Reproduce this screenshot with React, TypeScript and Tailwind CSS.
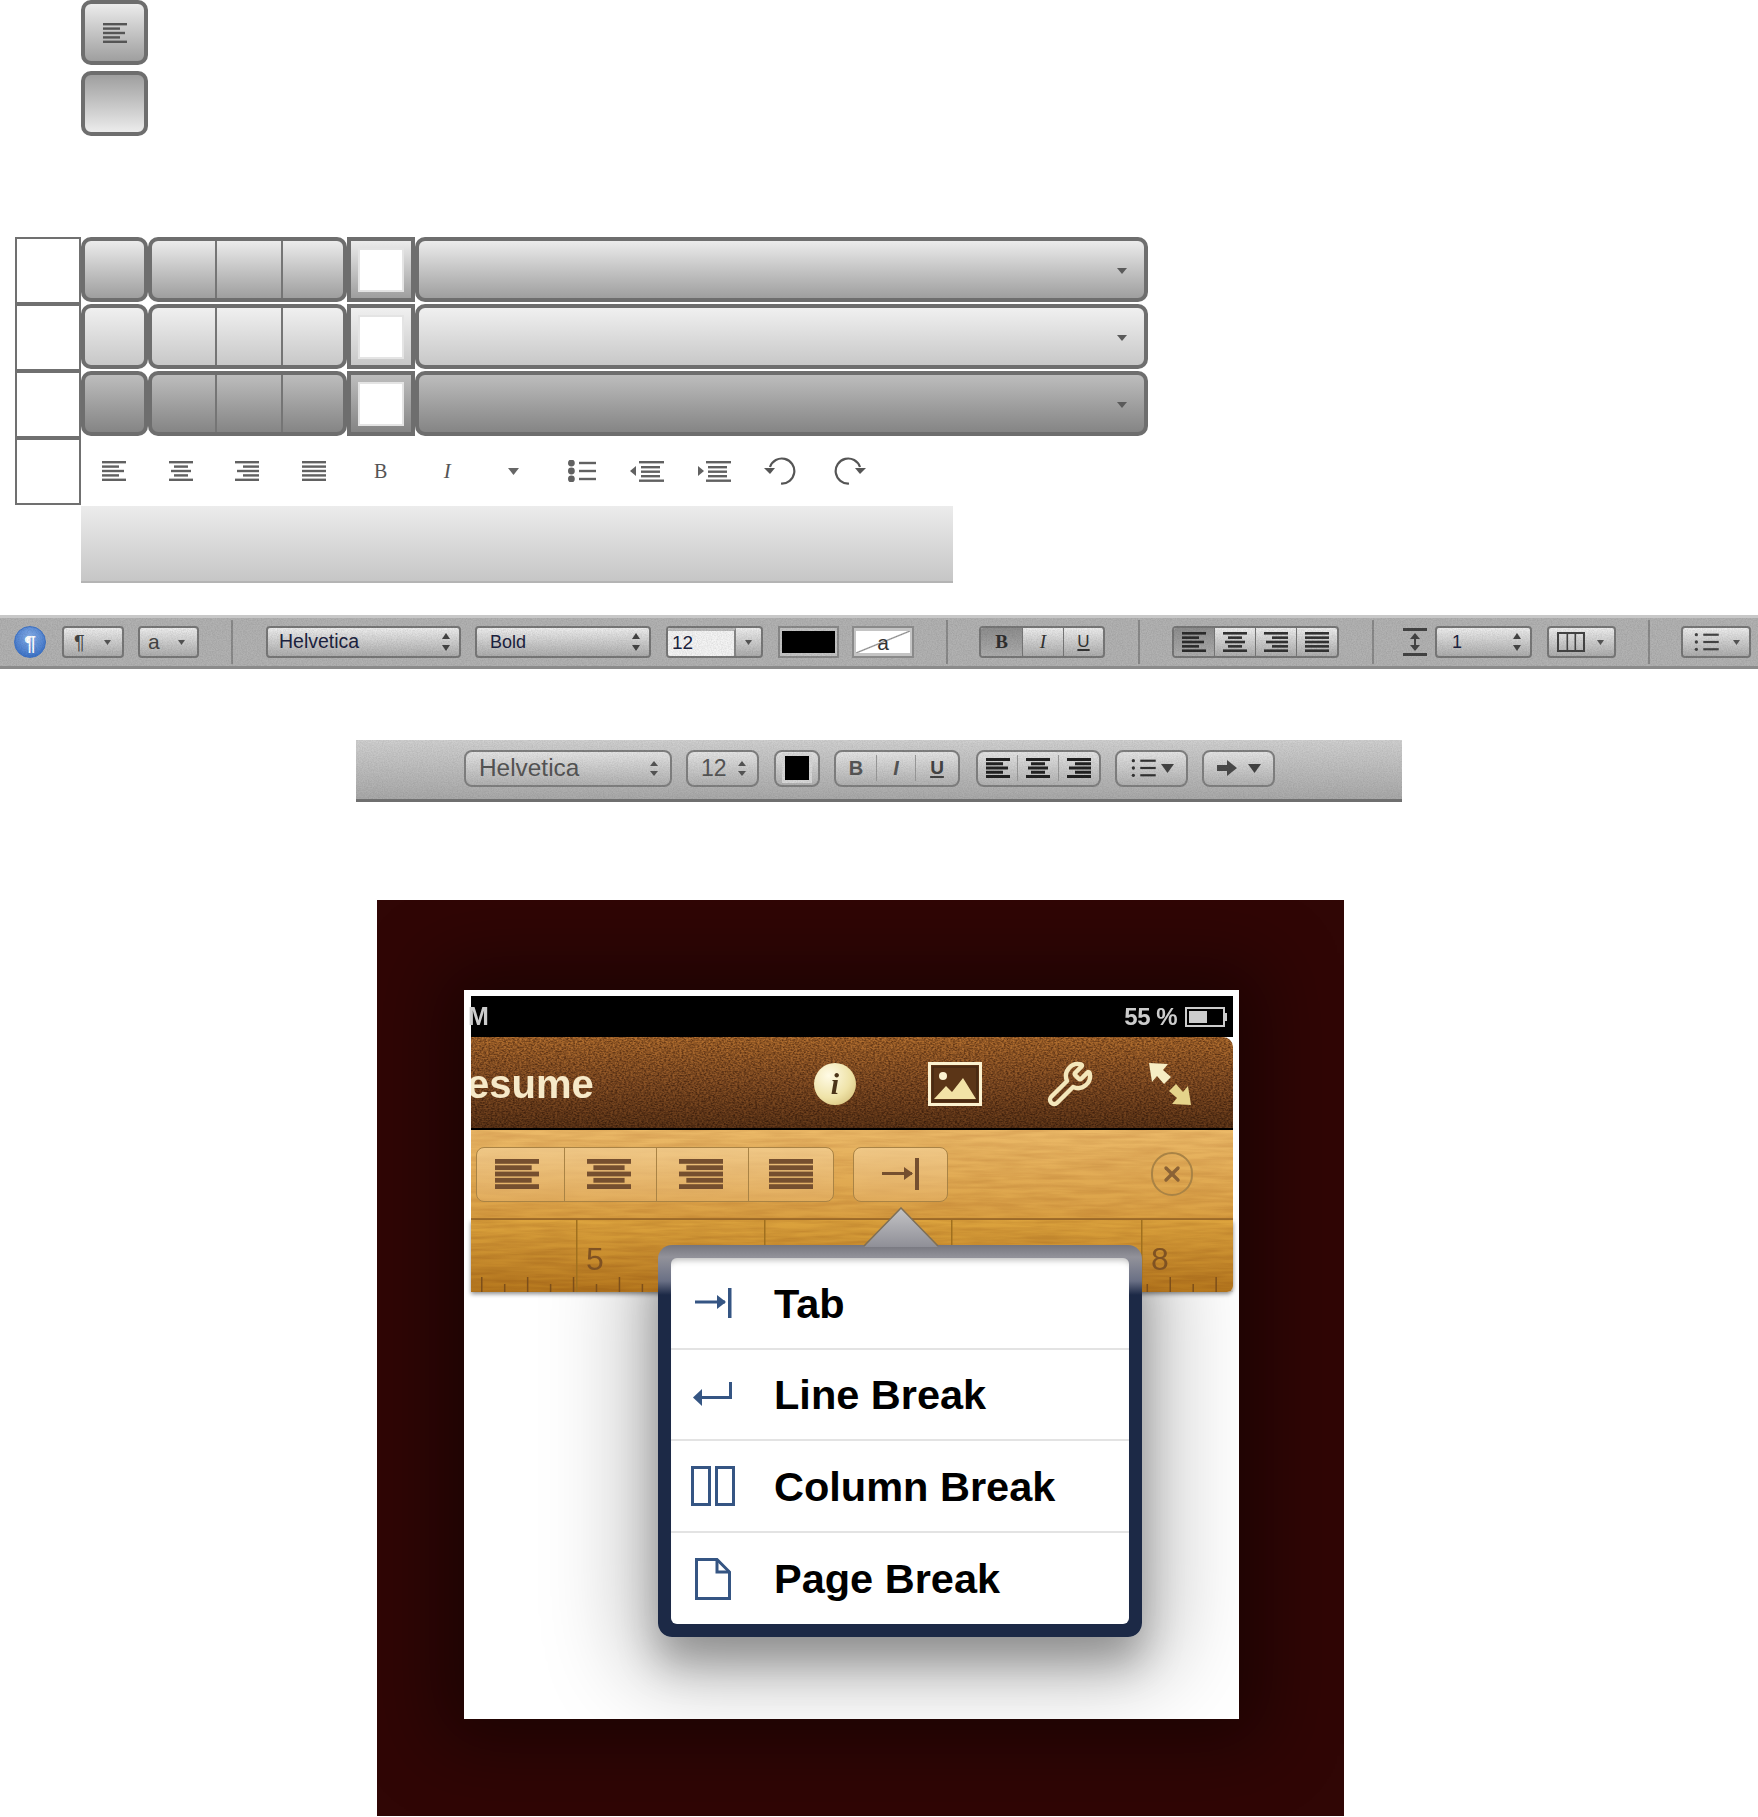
import { Wrench, X } from "lucide-react";

const sans = "font-['Liberation_Sans',Arial,sans-serif]";
const serif = "font-['Liberation_Serif','Times_New_Roman',serif]";

type Align = "left" | "center" | "right" | "justify";

const barWidths: Record<Align, number[]> = {
  left: [24, 17, 22, 17, 24],
  center: [24, 14, 20, 14, 24],
  right: [24, 16, 22, 16, 24],
  justify: [24, 24, 24, 24, 24],
};

const heavyWidths: Record<Align, number[]> = {
  left: [24, 20, 24, 20, 24],
  center: [24, 17, 24, 17, 24],
  right: [24, 20, 24, 20, 24],
  justify: [24, 24, 24, 24, 24],
};

function AlignIcon({ kind, width = 24, height = 20, color = "#616161", bar = 2.4, heavy = false }: { kind: Align; width?: number; height?: number; color?: string; bar?: number; heavy?: boolean }) {
  const step = (20 - bar) / 4;
  return (
    <svg width={width} height={height} viewBox="0 0 24 20" preserveAspectRatio="none" className="shrink-0">
      {(heavy ? heavyWidths : barWidths)[kind].map((w, i) => {
        const x = kind === "left" ? 0 : kind === "right" ? 24 - w : (24 - w) / 2;
        return <rect key={i} x={x} y={i * step} width={w} height={bar} fill={color} />;
      })}
    </svg>
  );
}

function Caret({ width = 9, height = 6, color = "#555" }: { width?: number; height?: number; color?: string }) {
  return (
    <svg width={width} height={height} viewBox="0 0 10 6" preserveAspectRatio="none" className="shrink-0">
      <polygon points="0,0 10,0 5,6" fill={color} />
    </svg>
  );
}

function UpDown({ color = "#444", height = 18 }: { color?: string; height?: number }) {
  return (
    <svg width="8" height={height} viewBox="0 0 8 18" preserveAspectRatio="none" className="shrink-0">
      <polygon points="4,0 8,6 0,6" fill={color} />
      <polygon points="0,12 8,12 4,18" fill={color} />
    </svg>
  );
}

function ListIcon({ width = 28, height = 22, color = "#616161", dot = 3.4 }: { width?: number; height?: number; color?: string; dot?: number }) {
  return (
    <svg width={width} height={height} viewBox="0 0 28 22" className="shrink-0">
      {[3, 11, 19].map((y) => (
        <g key={y}>
          <circle cx="3.4" cy={y} r={dot} fill={color} />
          <rect x="11" y={y - 1.2} width="17" height="2.4" fill={color} />
        </g>
      ))}
    </svg>
  );
}

function IndentIcon({ out }: { out?: boolean }) {
  return (
    <svg width="34" height="22" viewBox="0 0 34 22" className="shrink-0">
      <rect x="9" y="1" width="25" height="2.4" fill="#616161" />
      <rect x="11" y="6" width="19" height="2.4" fill="#616161" />
      <rect x="11" y="10.5" width="19" height="2.4" fill="#616161" />
      <rect x="11" y="15" width="19" height="2.4" fill="#616161" />
      <rect x="9" y="19.5" width="25" height="2.4" fill="#616161" />
      {out ? <polygon points="0,11 6,6 6,16" fill="#616161" /> : <polygon points="7,11 1,6 1,16" fill="#616161" />}
    </svg>
  );
}

function TurnIcon({ redo }: { redo?: boolean }) {
  return (
    <svg width="32" height="28" viewBox="0 0 32 28" className={redo ? "shrink-0 -scale-x-100" : "shrink-0"}>
      <path d="M6 10 A12.5 12.5 0 1 1 17 26.5" fill="none" stroke="#555" strokeWidth="2.2" />
      <polygon points="0,11 11,11 6,17" fill="#555" />
    </svg>
  );
}

function Grain({ id, freq, seed = 3, tint = "0 0 0", className }: { id: string; freq: string; seed?: number; tint?: string; className: string }) {
  const [r, g, b] = tint.split(" ");
  return (
    <svg className={`pointer-events-none absolute inset-0 h-full w-full ${className}`}>
      <filter id={id} colorInterpolationFilters="sRGB">
        <feTurbulence type="fractalNoise" baseFrequency={freq} numOctaves="3" seed={seed} />
        <feColorMatrix values={`0 0 0 0 ${r} 0 0 0 0 ${g} 0 0 0 0 ${b} 2 0 0 0 -0.6`} />
      </filter>
      <rect width="100%" height="100%" filter={`url(#${id})`} />
    </svg>
  );
}

const rowTone = {
  normal: "from-[#ececec] to-[#9f9f9f]",
  light: "from-[#f0f0f0] to-[#c8c8c8]",
  dark: "from-[#bdbdbd] to-[#858585]",
};

function SpriteRow({ tone }: { tone: keyof typeof rowTone }) {
  const grad = `bg-linear-to-b ${rowTone[tone]}`;
  return (
    <div className="mb-[2px] flex h-[65px]">
      <div className={`w-[67px] rounded-[10px] border-[4px] border-[#6e6e6e] ${grad}`} />
      <div className={`flex w-[199px] rounded-[10px] border-[4px] border-[#6e6e6e] ${grad}`}>
        <div className="w-[65px] border-r-2 border-[#757575]" />
        <div className="w-[66px] border-r-2 border-[#757575]" />
      </div>
      <div className={`flex w-[68px] items-center justify-center border-[4px] border-[#6e6e6e] ${grad}`}>
        <div className="h-[44px] w-[46px] border-2 border-[#e4e4e4] bg-white" />
      </div>
      <div className={`flex w-[733px] items-center justify-end rounded-[10px] border-[4px] border-[#6e6e6e] pr-[17px] pt-[3px] ${grad}`}>
        <Caret width={10} height={6} color="#5a5a5a" />
      </div>
    </div>
  );
}

function IconCell({ children }: { children: React.ReactNode }) {
  return <div className="flex w-[66.6px] shrink-0 items-center justify-center">{children}</div>;
}

const macBtn = "flex h-[32px] shrink-0 items-center rounded-[4px] border-2 border-[#787878] bg-linear-to-b from-[#eeeeee] to-[#adadad]";
const sep = "h-[44px] w-[2px] shrink-0 bg-[#8a8a8a]";
const btn2 = "flex h-[37px] shrink-0 items-center rounded-[8px] border-2 border-[#808080] bg-linear-to-b from-[#e4e4e4] to-[#b2b2b2]";

function MainToolbar() {
  return (
    <div className={`relative mt-[32px] flex h-[54px] items-center border-t-[3px] border-b-[3px] border-t-[#c8c8c8] border-b-[#8b8b8b] bg-[#b2b2b2] pl-[14px] ${sans}`}>
      <Grain id="tb1" freq="0.8" className="opacity-[0.08]" />
      <div className="flex h-[32px] w-[32px] shrink-0 items-center justify-center rounded-full border border-[#3f74c8] bg-[radial-gradient(circle_at_50%_35%,#88b0ea,#2a64c0)] text-[21px] font-bold leading-none text-white">¶</div>
      <div className={`${macBtn} ml-[16px] w-[62px] justify-between pl-[10px] pr-[11px] text-[20px] text-[#444]`}>¶<Caret width={7} height={5} /></div>
      <div className={`${macBtn} ml-[14px] w-[61px] justify-between pl-[8px] pr-[12px] text-[21px] text-[#444]`}>a<Caret width={7} height={5} /></div>
      <div className={`${sep} ml-[32px]`} />
      <div className={`${macBtn} ml-[33px] w-[195px] justify-between pl-[11px] pr-[9px] text-[19.5px] text-[#1c2340]`}>Helvetica<UpDown /></div>
      <div className={`${macBtn} ml-[14px] w-[176px] justify-between pl-[13px] pr-[9px] text-[18px] text-[#1c2340]`}>Bold<UpDown /></div>
      <div className={`${macBtn} ml-[15px] w-[97px] overflow-hidden`}>
        <div className="flex h-full w-[68px] items-center border-t-[3px] border-r-2 border-t-[#bbbbbb] border-r-[#888] bg-[#f4f4f4] pl-[4px] text-[19px] text-[#1c2340]">12</div>
        <div className="flex flex-1 justify-center"><Caret width={7} height={5} /></div>
      </div>
      <div className="ml-[15px] flex h-[32px] w-[61px] shrink-0 items-center justify-center border-2 border-[#8a8a8a] bg-[#c4c4c4]">
        <div className="h-[22px] w-[53px] bg-black" />
      </div>
      <div className="relative ml-[13px] flex h-[32px] w-[62px] shrink-0 items-center justify-center border-2 border-[#8a8a8a] bg-[#c4c4c4]">
        <div className="flex h-[22px] w-[54px] items-center justify-center bg-[linear-gradient(to_top_left,#fff_47%,#888_50%,#fff_53%)] text-[21px] leading-none text-[#333]">a</div>
      </div>
      <div className={`${sep} ml-[32px]`} />
      <div className={`${macBtn} ml-[31px] w-[126px] overflow-hidden`}>
        <div className={`flex h-full w-[42px] items-center justify-center border-r border-[#777] bg-linear-to-b from-[#8e8e8e] to-[#adadad] text-[19px] font-bold text-[#2f2f2f] ${serif}`}>B</div>
        <div className={`flex h-full w-[41px] items-center justify-center border-r border-[#777] text-[19px] italic text-[#333] ${serif}`}>I</div>
        <div className={`flex h-full flex-1 items-center justify-center text-[17px] text-[#333] underline decoration-2 underline-offset-[2px] ${sans}`}>U</div>
      </div>
      <div className={`${sep} ml-[33px]`} />
      <div className={`${macBtn} ml-[32px] w-[167px] overflow-hidden`}>
        <div className="flex h-full w-[41px] items-center justify-center border-r border-[#777] bg-linear-to-b from-[#8e8e8e] to-[#adadad]"><AlignIcon kind="left" color="#2c2c2c" bar={2.6} /></div>
        <div className="flex h-full w-[41px] items-center justify-center border-r border-[#777]"><AlignIcon kind="center" color="#333" bar={2.6} /></div>
        <div className="flex h-full w-[41px] items-center justify-center border-r border-[#777]"><AlignIcon kind="right" color="#333" bar={2.6} /></div>
        <div className="flex h-full flex-1 items-center justify-center"><AlignIcon kind="justify" color="#333" bar={2.6} /></div>
      </div>
      <div className={`${sep} ml-[33px]`} />
      <svg width="24" height="28" viewBox="0 0 24 28" className="ml-[29px] shrink-0">
        <rect x="0" y="0" width="24" height="3" fill="#444" />
        <rect x="0" y="25" width="24" height="3" fill="#444" />
        <rect x="11" y="6" width="2" height="16" fill="#444" />
        <polygon points="12,5 17,11 7,11" fill="#444" />
        <polygon points="12,23 17,17 7,17" fill="#444" />
      </svg>
      <div className={`${macBtn} ml-[8px] w-[97px] justify-between pl-[15px] pr-[9px] text-[18px] text-[#1c2340]`}>1<UpDown /></div>
      <div className={`${macBtn} ml-[15px] w-[69px] justify-between pl-[8px] pr-[10px]`}>
        <svg width="28" height="20" viewBox="0 0 28 20" className="shrink-0">
          <rect x="1" y="1" width="26" height="18" fill="none" stroke="#444" strokeWidth="2" />
          <rect x="9.5" y="1" width="1.6" height="18" fill="#444" />
          <rect x="17.5" y="1" width="1.6" height="18" fill="#444" />
        </svg>
        <Caret width={7} height={5} />
      </div>
      <div className={`${sep} ml-[32px]`} />
      <div className={`${macBtn} ml-[31px] w-[70px] justify-between pl-[8px] pr-[9px]`}>
        <ListIcon width={30} height={20} color="#444" dot={1.8} />
        <Caret width={7} height={5} />
      </div>
    </div>
  );
}

function CompactToolbar() {
  return (
    <div className={`relative ml-[356px] mt-[71px] flex h-[62px] w-[1046px] items-center border-b-[3px] border-b-[#6f6f6f] bg-linear-to-b from-[#d0d0d0] to-[#a9a9a9] pb-[3px] pl-[108px] ${sans}`}>
      <Grain id="tb2" freq="0.8" seed={8} className="opacity-[0.07]" />
      <div className={`${btn2} w-[208px] justify-between pl-[13px] pr-[12px] text-[24.4px] text-[#555]`}>Helvetica<UpDown color="#555" height={15} /></div>
      <div className={`${btn2} ml-[14px] w-[73px] justify-between pl-[13px] pr-[11px] text-[23px] text-[#555]`}>12<UpDown color="#555" height={15} /></div>
      <div className={`${btn2} ml-[15px] w-[46px] justify-center`}>
        <div className="box-content h-[24px] w-[24px] border-[3px] border-[#d8d8d8] bg-black" />
      </div>
      <div className={`${btn2} ml-[14px] w-[126px]`}>
        <div className="flex h-[26px] w-[41px] items-center justify-center border-r border-[#999] text-[20px] font-bold text-[#555]">B</div>
        <div className="flex h-[26px] w-[39px] items-center justify-center border-r border-[#999] text-[20px] font-bold italic text-[#555]">I</div>
        <div className="flex h-[26px] flex-1 items-center justify-center text-[19px] font-bold text-[#444] underline decoration-2 underline-offset-[2px]">U</div>
      </div>
      <div className={`${btn2} ml-[16px] w-[125px]`}>
        <div className="flex h-[26px] w-[40px] items-center justify-center border-r border-[#999]"><AlignIcon kind="left" color="#222" bar={3} /></div>
        <div className="flex h-[26px] w-[41px] items-center justify-center border-r border-[#999]"><AlignIcon kind="center" color="#222" bar={3} /></div>
        <div className="flex h-[26px] flex-1 items-center justify-center"><AlignIcon kind="right" color="#222" bar={3} /></div>
      </div>
      <div className={`${btn2} ml-[14px] w-[73px] justify-center gap-[5px]`}>
        <ListIcon width={26} height={20} color="#333" dot={1.8} />
        <Caret width={13} height={9} color="#444" />
      </div>
      <div className={`${btn2} ml-[14px] w-[73px] justify-center gap-[11px]`}>
        <svg width="20" height="16" viewBox="0 0 20 16" className="shrink-0">
          <polygon points="0,5 10,5 10,0 20,8 10,16 10,11 0,11" fill="#4a4a4a" />
        </svg>
        <Caret width={13} height={9} color="#444" />
      </div>
    </div>
  );
}

function PageIcon({ kind }: { kind: "tab" | "line" | "column" | "page" }) {
  const blue = "#355583";
  if (kind === "tab")
    return (
      <svg width="40" height="32" viewBox="0 0 40 32">
        <rect x="2" y="13.5" width="30" height="3" fill={blue} />
        <polygon points="24,8 33,15 24,22" fill={blue} />
        <rect x="35" y="1" width="3.5" height="30" fill={blue} />
      </svg>
    );
  if (kind === "line")
    return (
      <svg width="40" height="26" viewBox="0 0 40 26">
        <rect x="36" y="0" width="3" height="17" fill={blue} />
        <rect x="6" y="14" width="33" height="3" fill={blue} />
        <polygon points="0,15.5 9,7 9,24" fill={blue} />
      </svg>
    );
  if (kind === "column")
    return (
      <svg width="44" height="40" viewBox="0 0 44 40">
        <rect x="1.5" y="1.5" width="17" height="37" fill="none" stroke={blue} strokeWidth="3" />
        <rect x="25.5" y="1.5" width="17" height="37" fill="none" stroke={blue} strokeWidth="3" />
      </svg>
    );
  return (
    <svg width="36" height="42" viewBox="0 0 36 42">
      <path d="M1.5 1.5H22L34.5 14V40.5H1.5Z" fill="none" stroke={blue} strokeWidth="3" />
      <path d="M22 1.5V14H34.5" fill="none" stroke={blue} strokeWidth="3" />
    </svg>
  );
}

const popoverRows: { kind: "tab" | "line" | "column" | "page"; label: string }[] = [
  { kind: "tab", label: "Tab" },
  { kind: "line", label: "Line Break" },
  { kind: "column", label: "Column Break" },
  { kind: "page", label: "Page Break" },
];

const woodCells: { kind: Align; className: string }[] = [
  { kind: "left", className: "w-[88px] border-r-[1.5px] pr-[8px]" },
  { kind: "center", className: "w-[92px] border-r-[1.5px] pr-[3px]" },
  { kind: "right", className: "w-[92px] border-r-[1.5px] pr-[3px]" },
  { kind: "justify", className: "flex-1" },
];

function Ruler() {
  const ticks = Array.from({ length: 34 }, (_, i) => 10 + i * 22.95);
  return (
    <svg width="762" height="72" className="absolute inset-0">
      {ticks.map((x, i) => (
        <rect key={x} x={x} y={i % 2 === 0 ? 57 : 64} width="1.5" height={i % 2 === 0 ? 15 : 8} fill="#7d4f1a" />
      ))}
      {[105, 293, 480, 670].map((x) => (
        <rect key={x} x={x} y="0" width="1.5" height="72" fill="#a0701f" />
      ))}
    </svg>
  );
}

function IpadShot() {
  return (
    <div className="ml-[377px] mt-[98px] h-[916px] w-[967px] overflow-hidden bg-[#300605] pl-[87px] pt-[90px]">
      <div className={`relative h-[729px] w-[775px] overflow-hidden bg-white pl-[7px] pr-[6px] pt-[6px] shadow-[0_0_70px_25px_rgba(0,0,0,0.42)] ${sans}`}>
        {/* shadow sits under the wood so the ruler stays clean */}
        <div className="absolute left-[194px] top-[255px] h-[392px] w-[484px] rounded-[14px] shadow-[0_26px_40px_rgba(0,0,0,0.28),0_12px_90px_26px_rgba(0,0,0,0.26)]" />
        <div className="relative z-10">
          <div className="flex h-[41px] items-center justify-between bg-black pr-[6px] font-bold text-[#cccccc]">
            <span className="-ml-[3px] text-[25px] leading-none">M</span>
            <div className="flex items-center gap-[8px]">
              <span className="text-[24px] leading-none tracking-[-0.5px]">55 %</span>
              <div className="flex items-center">
                <div className="h-[20px] w-[40px] border-2 border-[#cccccc] p-[2px]">
                  <div className="h-full w-[55%] bg-[#cccccc]" />
                </div>
                <div className="h-[8px] w-[2px] bg-[#cccccc]" />
              </div>
            </div>
          </div>
          <div className="relative flex h-[93px] items-center overflow-hidden rounded-tr-[10px] border-b-2 border-black bg-linear-to-b from-[#b4702f] via-[#8a5225] to-[#633818] pt-[3px]">
            <Grain id="leather" freq="0.45 0.7" tint="0.2 0.08 0" className="opacity-[0.55] mix-blend-multiply" />
            <span className="relative -ml-[4px] w-[347px] shrink-0 text-[40px] font-bold leading-none text-[#f6e9c8]">esume</span>
            <div className={`relative flex h-[42px] w-[42px] shrink-0 items-center justify-center rounded-full bg-[radial-gradient(circle_at_35%_30%,#fffbe6,#efe3a8_55%,#cdb56b)] text-[30px] font-bold italic leading-none text-[#4b3419] ${serif}`}>i</div>
            <svg width="54" height="44" viewBox="0 0 54 44" className="relative ml-[72px] shrink-0">
              <rect x="1.5" y="1.5" width="51" height="41" fill="#5b3517" stroke="#fbf2d0" strokeWidth="3" />
              <rect x="5" y="5" width="44" height="34" fill="#5b3517" stroke="#3a2210" strokeWidth="1" />
              <circle cx="15" cy="14" r="4" fill="#fbf2d0" />
              <polygon points="6,37 18,24 24,30 35,16 48,37" fill="#f2e2a6" />
            </svg>
            <Wrench size={48} strokeWidth={2.2} color="#f4e7bb" className="relative ml-[64px] shrink-0" />
            <svg width="42" height="42" viewBox="0 0 42 42" className="relative ml-[55px] shrink-0">
              <polygon points="0,0 19,1 14,7 22,14 15,21 8,13 3,19" fill="#f6edc4" />
              <polygon points="42,42 23,41 28,35 20,28 27,21 34,29 39,23" fill="#e4d38a" />
            </svg>
          </div>
          <div className="relative flex h-[90px] items-center border-b-2 border-[#a5702a] bg-linear-to-b from-[#ebb968] to-[#d99f42] pl-[5px]">
            <Grain id="woodA" freq="0.02 0.22" tint="0.55 0.28 0" className="opacity-[0.14] mix-blend-multiply" />
            <div className="relative flex h-[55px] w-[358px] rounded-[8px] border-[1.5px] border-[#a98345] bg-linear-to-b from-[#f4d197]/70 to-[#e5b268]/60">
              {woodCells.map((cell) => (
                <div key={cell.kind} className={`flex h-full items-center justify-center border-[#a98345] ${cell.className}`}>
                  <AlignIcon kind={cell.kind} width={44} height={30} color="#754f2f" bar={3.2} heavy />
                </div>
              ))}
            </div>
            <div className="relative ml-[19px] flex h-[55px] w-[95px] items-center justify-center rounded-[8px] border-[1.5px] border-[#a98345] bg-linear-to-b from-[#f4d197]/70 to-[#e5b268]/60">
              <svg width="38" height="32" viewBox="0 0 38 32">
                <rect x="0" y="14" width="30" height="3" fill="#754f2f" />
                <polygon points="22,9 31,15.5 22,22" fill="#754f2f" />
                <rect x="33" y="0" width="4" height="32" fill="#754f2f" />
              </svg>
            </div>
            <div className="relative ml-[203px] flex h-[44px] w-[42px] items-center justify-center rounded-full border-2 border-[#a98345]">
              <X size={24} strokeWidth={3.4} color="#8a6236" />
            </div>
          </div>
          <div className="relative h-[72px] rounded-br-[6px] bg-linear-to-b from-[#dda43e] to-[#b5771d] shadow-[0_2px_4px_rgba(0,0,0,0.45)]">
            <Grain id="woodB" freq="0.02 0.25" seed={11} tint="0.5 0.25 0" className="opacity-[0.16] mix-blend-multiply" />
            <Ruler />
            <span className="absolute left-[115px] top-[23px] text-[32px] leading-none text-[#7f5222]">5</span>
            <span className="absolute left-[680px] top-[23px] text-[32px] leading-none text-[#7f5222]">8</span>
          </div>
        </div>
        <div className="absolute left-[194px] top-[255px] z-20 h-[392px] w-[484px] rounded-[14px] bg-[linear-gradient(to_bottom,#75757d_0,#92929a_12px,#6a7085_36px,#1c2946_50px)] px-[13px] pb-[13px] pt-[13px]">
          <svg width="76" height="40" viewBox="0 0 76 40" className="absolute left-[205px] top-[-38px]">
            <defs>
              <linearGradient id="tip" x1="0" y1="0" x2="0" y2="1">
                <stop offset="0" stopColor="#c4c4c6" />
                <stop offset="1" stopColor="#8f8f97" />
              </linearGradient>
            </defs>
            <polygon points="38,1 75,40 1,40" fill="url(#tip)" />
            <polyline points="1,39 38,1 75,39" fill="none" stroke="#7d6f58" strokeWidth="1.5" />
          </svg>
          <div className="h-[366px] overflow-hidden rounded-[6px] bg-white shadow-[inset_0_7px_6px_-5px_rgba(0,0,0,0.28)]">
            {popoverRows.map((row, i) => (
              <div key={row.label} className={`flex h-[91.5px] items-center pt-[1px] ${i < 3 ? "border-b-2 border-[#e3e3e3]" : ""}`}>
                <div className="flex w-[84px] shrink-0 justify-center">
                  <PageIcon kind={row.kind} />
                </div>
                <span className="ml-[19px] text-[41.5px] font-bold leading-none text-black">{row.label}</span>
              </div>
            ))}
          </div>
        </div>
      </div>
    </div>
  );
}

export default function App() {
  return (
    <div className="h-[1817px] w-[1758px] overflow-hidden bg-white">
      <div className="ml-[81px] flex w-[67px] flex-col gap-[6px]">
        <div className="flex h-[65px] items-center justify-center rounded-[10px] border-[4px] border-[#6e6e6e] bg-linear-to-b from-[#ececec] to-[#9f9f9f]">
          <AlignIcon kind="left" color="#555" />
        </div>
        <div className="h-[65px] rounded-[10px] border-[4px] border-[#6e6e6e] bg-linear-to-b from-[#9f9f9f] to-[#ececec]" />
      </div>
      <div className="ml-[15px] mt-[101px] flex">
        <div className="flex w-[66px] shrink-0 flex-col">
          <div className="h-[67px] border-2 border-[#707070]" />
          <div className="h-[67px] border-2 border-[#707070]" />
          <div className="h-[67px] border-2 border-[#707070]" />
          <div className="h-[67px] border-2 border-[#707070]" />
        </div>
        <div>
          <SpriteRow tone="normal" />
          <SpriteRow tone="light" />
          <SpriteRow tone="dark" />
          <div className="flex h-[67px] items-center pb-[1px]">
            <IconCell><AlignIcon kind="left" /></IconCell>
            <IconCell><AlignIcon kind="center" /></IconCell>
            <IconCell><AlignIcon kind="right" /></IconCell>
            <IconCell><AlignIcon kind="justify" /></IconCell>
            <IconCell><span className={`text-[20px] leading-none text-[#555] ${serif}`}>B</span></IconCell>
            <IconCell><span className={`text-[21px] italic leading-none text-[#555] ${serif}`}>I</span></IconCell>
            <IconCell><Caret width={11} height={7} color="#666" /></IconCell>
            <div className="ml-[2px]"><IconCell><ListIcon /></IconCell></div>
            <div className="-ml-[2px]"><IconCell><IndentIcon out /></IconCell></div>
            <IconCell><IndentIcon /></IconCell>
            <IconCell><TurnIcon /></IconCell>
            <div className="ml-[3px]"><IconCell><TurnIcon redo /></IconCell></div>
          </div>
        </div>
      </div>
      <div className="ml-[81px] mt-[1px] h-[77px] w-[872px] border-b-2 border-[#b4b4b4] bg-linear-to-b from-[#ececec] to-[#c6c6c6]" />
      <MainToolbar />
      <CompactToolbar />
      <IpadShot />
    </div>
  );
}
